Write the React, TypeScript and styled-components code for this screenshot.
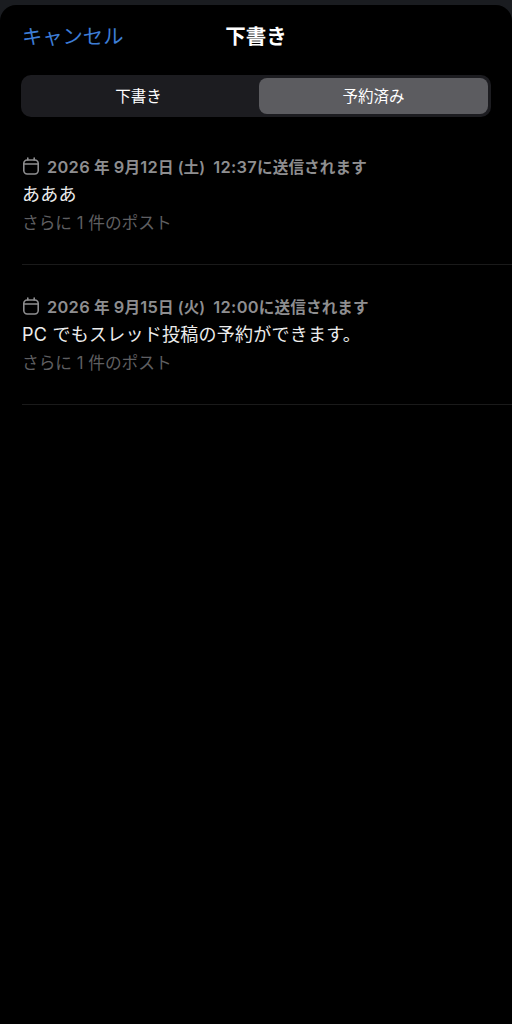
import React from "react";
import styled, { createGlobalStyle } from "styled-components";

const GlobalStyle = createGlobalStyle`
  html, body {
    margin: 0;
    padding: 0;
    background: #1a1c20;
  }
  body {
    font-family: "Inter", "Noto Sans CJK JP", sans-serif;
  }
`;

const Sheet = styled.div`
  margin-top: 5px;
  height: 1019px;
  background: #000;
  border-radius: 16px 16px 0 0;
  overflow: hidden;
`;

const Header = styled.header`
  display: grid;
  grid-template-columns: 1fr auto 1fr;
  align-items: center;
  height: 56px;
  padding: 2px 22px 0;
`;

const CancelButton = styled.span`
  font-size: 20.3px;
  color: #3d7dd6;
`;

const Title = styled.h1`
  margin: 0;
  font-size: 20.5px;
  font-weight: 700;
  color: #fff;
`;

const Segments = styled.div`
  display: grid;
  grid-template-columns: 1fr 229px;
  column-gap: 3px;
  height: 36px;
  margin: 12px 21px 0;
  padding: 3px 3px 3px 0;
  background: #1c1c20;
  border-radius: 10px;
`;

const Segment = styled.div<{ $active?: boolean }>`
  display: flex;
  align-items: center;
  justify-content: center;
  padding-bottom: 2px;
  font-size: 15.5px;
  color: #fff;
  border-radius: 8px;
  background: ${(p) => (p.$active ? "#5c5c60" : "transparent")};
`;

const List = styled.div`
  margin-top: 8px;
`;

const Item = styled.article`
  height: 140px;
  box-sizing: border-box;
  margin-left: 22px;
  padding-top: 30px;
  border-bottom: 1px solid #1a1a1a;
`;

const Meta = styled.div`
  display: flex;
  align-items: center;
  gap: 7px;
  height: 22px;
  font-size: 15.6px;
  font-weight: 600;
  letter-spacing: 0.1px;
  color: #8e8e90;
  white-space: nowrap;
`;

const Num = styled.span`
  font-size: 16.4px;
  letter-spacing: 0.3px;
`;

const IconSvg = styled.svg`
  flex: none;
`;

const Body = styled.div`
  margin-top: 4.5px;
  height: 26px;
  line-height: 26px;
  font-size: 18px;
  letter-spacing: 0.25px;
  color: #ececec;
`;

const More = styled.div`
  margin-top: 3px;
  height: 24px;
  line-height: 24px;
  font-size: 16.7px;
  color: #5f5f61;
`;

const CalendarIcon = () => (
  <IconSvg width="18" height="18" viewBox="0 0 18 18" fill="none" stroke="#8e8e90" strokeWidth="1.6" strokeLinecap="round">
    <rect x="1.8" y="3" width="14.4" height="14" rx="3.4" />
    <path d="M1.8 7h14.4M5.8 1v2M12.2 1v2" />
  </IconSvg>
);

const posts = [
  {
    id: 1,
    date: (
      <>
        <Num>2026</Num> 年 <Num>9</Num>月<Num>12</Num>日 (土){"\u00a0"} <Num>12:37</Num>に送信されます
      </>
    ),
    text: "あああ",
  },
  {
    id: 2,
    date: (
      <>
        <Num>2026</Num> 年 <Num>9</Num>月<Num>15</Num>日 (火){"\u00a0"} <Num>12:00</Num>に送信されます
      </>
    ),
    text: "PC でもスレッド投稿の予約ができます。",
  },
];

export default function App() {
  return (
    <>
      <GlobalStyle />
      <Sheet>
        <Header>
          <CancelButton>キャンセル</CancelButton>
          <Title>下書き</Title>
        </Header>
        <Segments>
          <Segment>下書き</Segment>
          <Segment $active>予約済み</Segment>
        </Segments>
        <List>
          {posts.map((post) => (
            <Item key={post.id}>
              <Meta>
                <CalendarIcon />
                <span>{post.date}</span>
              </Meta>
              <Body>{post.text}</Body>
              <More>さらに 1 件のポスト</More>
            </Item>
          ))}
        </List>
      </Sheet>
    </>
  );
}
